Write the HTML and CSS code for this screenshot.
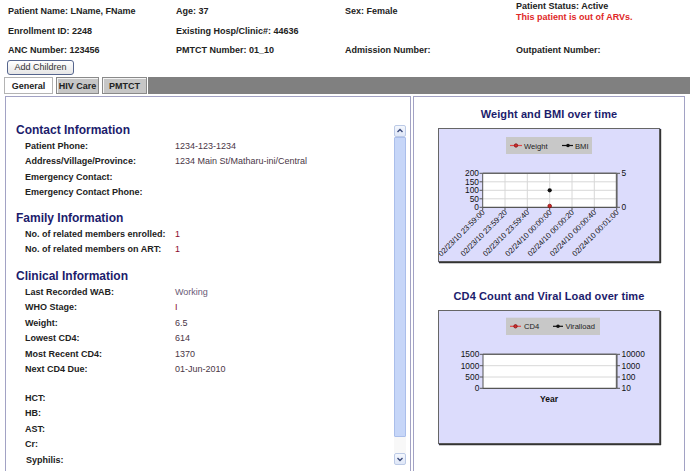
FILE: index.html
```html
<!DOCTYPE html>
<html>
<head>
<meta charset="utf-8">
<link rel="stylesheet" href="styles.css">
</head>
<body>
<div class="hdr">
  <div>Patient Name: LName, FName</div>
  <div>Age: 37</div>
  <div>Sex: Female</div>
  <div class="status"><div>Patient Status: Active</div><div class="alert">This patient is out of ARVs.</div></div>
  <div>Enrollment ID: 2248</div>
  <div>Existing Hosp/Clinic#: 44636</div>
  <div></div>
  <div></div>
  <div>ANC Number: 123456</div>
  <div>PMTCT Number: 01_10</div>
  <div>Admission Number:</div>
  <div>Outpatient Number:</div>
</div>
<div class="btnrow"><button class="btn">Add Children</button></div>
<div class="tabs">
  <div class="tab active">General</div>
  <div class="tab">HIV Care</div>
  <div class="tab">PMTCT</div>
  <div class="tabfill"></div>
</div>
<div class="panels">
  <div class="lpanel">
    <div class="scrollwrap">
      <div class="content">
        <div class="sec">Contact Information</div>
        <div class="row"><span class="lbl">Patient Phone:</span><span class="val">1234-123-1234</span></div>
        <div class="row"><span class="lbl">Address/Village/Province:</span><span class="val">1234 Main St/Matharu-ini/Central</span></div>
        <div class="row"><span class="lbl">Emergency Contact:</span><span class="val"></span></div>
        <div class="row"><span class="lbl">Emergency Contact Phone:</span><span class="val"></span></div>
        <div class="sec mt">Family Information</div>
        <div class="row"><span class="lbl">No. of related members enrolled:</span><span class="val red">1</span></div>
        <div class="row"><span class="lbl">No. of related members on ART:</span><span class="val red">1</span></div>
        <div class="sec mt2">Clinical Information</div>
        <div class="row"><span class="lbl">Last Recorded WAB:</span><span class="val muted">Working</span></div>
        <div class="row"><span class="lbl">WHO Stage:</span><span class="val red">I</span></div>
        <div class="row"><span class="lbl">Weight:</span><span class="val">6.5</span></div>
        <div class="row"><span class="lbl">Lowest CD4:</span><span class="val">614</span></div>
        <div class="row"><span class="lbl">Most Recent CD4:</span><span class="val">1370</span></div>
        <div class="row"><span class="lbl">Next CD4 Due:</span><span class="val">01-Jun-2010</span></div>
        <div class="spacer"></div>
        <div class="row"><span class="lbl">HCT:</span><span class="val"></span></div>
        <div class="row"><span class="lbl">HB:</span><span class="val"></span></div>
        <div class="row"><span class="lbl">AST:</span><span class="val"></span></div>
        <div class="row"><span class="lbl">Cr:</span><span class="val"></span></div>
        <div class="row"><span class="lbl ind">Syphilis:</span><span class="val"></span></div>
      </div>
      <div class="sb">
        <div class="sbbtn"><svg width="10" height="10" viewBox="0 0 10 10"><path d="M2.5 6 L5 3.5 L7.5 6" fill="none" stroke="#3a4a7a" stroke-width="1.4"/></svg></div>
        <div class="sbthumb"></div>
        <div class="sbtrack"></div>
        <div class="sbbtn"><svg width="10" height="10" viewBox="0 0 10 10"><path d="M2.5 4 L5 6.5 L7.5 4" fill="none" stroke="#3a4a7a" stroke-width="1.4"/></svg></div>
      </div>
    </div>
  </div>
  <div class="rpanel">
    <div class="ctitle">Weight and BMI over time</div>
    <svg class="chart" width="224" height="136" viewBox="0 0 224 136">
      <rect x="0" y="0" width="223" height="135" fill="#dcdcfc"/>
      <rect x="68" y="9" width="86" height="17" fill="#c8c8c8"/>
      <line x1="72" y1="17.5" x2="84" y2="17.5" stroke="#e04848" stroke-width="1.2"/>
      <circle cx="78" cy="17.5" r="1.7" fill="#d03030" stroke="#801010" stroke-width="0.8"/>
      <text x="86" y="20.5" class="lg">Weight</text>
      <line x1="124" y1="17.5" x2="135" y2="17.5" stroke="#111" stroke-width="1.2"/>
      <circle cx="130" cy="17.5" r="1.8" fill="#111"/>
      <text x="137" y="20.5" class="lg">BMI</text>
      <rect x="44.7" y="45.3" width="134" height="34" fill="#fff"/>
      <g stroke="#d8d8d8" stroke-width="1">
        <line x1="67" y1="45.3" x2="67" y2="79.3"/>
        <line x1="89.3" y1="45.3" x2="89.3" y2="79.3"/>
        <line x1="111.7" y1="45.3" x2="111.7" y2="79.3"/>
        <line x1="134" y1="45.3" x2="134" y2="79.3"/>
        <line x1="156.3" y1="45.3" x2="156.3" y2="79.3"/>
        <line x1="44.7" y1="53.8" x2="178.7" y2="53.8"/>
        <line x1="44.7" y1="62.3" x2="178.7" y2="62.3"/>
        <line x1="44.7" y1="70.8" x2="178.7" y2="70.8"/>
      </g>
      <g stroke="#555" stroke-width="1">
        <line x1="44.7" y1="45.3" x2="178.7" y2="45.3" stroke-width="1.6" stroke="#666"/>
        <line x1="44.7" y1="45.3" x2="44.7" y2="79.3"/>
        <line x1="178.7" y1="45.3" x2="178.7" y2="79.3" stroke-width="1.8" stroke="#666"/>
        <line x1="44.7" y1="79.3" x2="178.7" y2="79.3" stroke-width="1.3"/>
        <line x1="41.5" y1="45.3" x2="44.7" y2="45.3"/>
        <line x1="41.5" y1="53.8" x2="44.7" y2="53.8"/>
        <line x1="41.5" y1="62.3" x2="44.7" y2="62.3"/>
        <line x1="41.5" y1="70.8" x2="44.7" y2="70.8"/>
        <line x1="41.5" y1="79.3" x2="44.7" y2="79.3"/>
        <line x1="178.7" y1="45.3" x2="182" y2="45.3"/>
        <line x1="178.7" y1="79.3" x2="182" y2="79.3"/>
        <line x1="44.7" y1="79.3" x2="44.7" y2="82.5"/>
        <line x1="67" y1="79.3" x2="67" y2="82.5"/>
        <line x1="89.3" y1="79.3" x2="89.3" y2="82.5"/>
        <line x1="111.7" y1="79.3" x2="111.7" y2="82.5"/>
        <line x1="134" y1="79.3" x2="134" y2="82.5"/>
        <line x1="156.3" y1="79.3" x2="156.3" y2="82.5"/>
        <line x1="178.7" y1="79.3" x2="178.7" y2="82.5"/>
      </g>
      <g class="ax" text-anchor="end">
        <text x="41" y="48.3">200</text>
        <text x="41" y="56.8">150</text>
        <text x="41" y="65.3">100</text>
        <text x="41" y="73.8">50</text>
        <text x="41" y="82.3">0</text>
      </g>
      <g class="ax">
        <text x="183.5" y="48.3">5</text>
        <text x="183.5" y="82.3">0</text>
      </g>
      <g class="rx" text-anchor="end">
        <text transform="translate(47.2 85) rotate(-45)">02/23/10 23:59:00</text>
        <text transform="translate(69.5 85) rotate(-45)">02/23/10 23:59:20</text>
        <text transform="translate(91.8 85) rotate(-45)">02/23/10 23:59:40</text>
        <text transform="translate(114.2 85) rotate(-45)">02/24/10 00:00:00</text>
        <text transform="translate(136.5 85) rotate(-45)">02/24/10 00:00:20</text>
        <text transform="translate(158.8 85) rotate(-45)">02/24/10 00:00:40</text>
        <text transform="translate(181.2 85) rotate(-45)">02/24/10 00:01:00</text>
      </g>
      <circle cx="111.7" cy="62.3" r="2.1" fill="#111"/>
      <circle cx="111.7" cy="78" r="1.8" fill="#d02828" stroke="#801010" stroke-width="0.8"/>
      <rect x="0.5" y="0.5" width="221" height="133" fill="none" stroke="#666" stroke-width="1"/>
      <line x1="222.5" y1="1" x2="222.5" y2="135" stroke="#333" stroke-width="1.4"/>
      <line x1="1" y1="134.5" x2="223" y2="134.5" stroke="#333" stroke-width="1.4"/>
    </svg>
    <div class="ctitle t2">CD4 Count and Viral Load over time</div>
    <svg class="chart" width="224" height="136" viewBox="0 0 224 136">
      <rect x="0" y="0" width="223" height="135" fill="#dcdcfc"/>
      <rect x="68" y="7.7" width="94" height="17.3" fill="#c8c8c8"/>
      <line x1="72" y1="16.3" x2="83" y2="16.3" stroke="#e04848" stroke-width="1.2"/>
      <circle cx="77.5" cy="16.3" r="1.7" fill="#d03030" stroke="#801010" stroke-width="0.8"/>
      <text x="86" y="19.3" class="lg">CD4</text>
      <line x1="115" y1="16.3" x2="125" y2="16.3" stroke="#111" stroke-width="1.2"/>
      <circle cx="120" cy="16.3" r="1.8" fill="#111"/>
      <text x="127.5" y="19.3" class="lg">Viralload</text>
      <rect x="45" y="44.3" width="133.7" height="34" fill="#fff"/>
      <g stroke="#d8d8d8">
        <line x1="45" y1="55.7" x2="178.7" y2="55.7"/>
        <line x1="45" y1="67" x2="178.7" y2="67"/>
      </g>
      <g stroke="#555" stroke-width="1">
        <line x1="45" y1="44.3" x2="178.7" y2="44.3" stroke-width="1.6" stroke="#666"/>
        <line x1="45" y1="44.3" x2="45" y2="78.3"/>
        <line x1="178.7" y1="44.3" x2="178.7" y2="78.3" stroke-width="1.8" stroke="#666"/>
        <line x1="45" y1="78.3" x2="178.7" y2="78.3" stroke-width="1.3"/>
        <line x1="41.8" y1="44.3" x2="45" y2="44.3"/>
        <line x1="41.8" y1="55.7" x2="45" y2="55.7"/>
        <line x1="41.8" y1="67" x2="45" y2="67"/>
        <line x1="41.8" y1="78.3" x2="45" y2="78.3"/>
        <line x1="178.7" y1="44.3" x2="182" y2="44.3"/>
        <line x1="178.7" y1="55.7" x2="182" y2="55.7"/>
        <line x1="178.7" y1="67" x2="182" y2="67"/>
        <line x1="178.7" y1="78.3" x2="182" y2="78.3"/>
      </g>
      <g class="ax" text-anchor="end">
        <text x="41.3" y="47.3">1500</text>
        <text x="41.3" y="58.7">1000</text>
        <text x="41.3" y="70">500</text>
        <text x="41.3" y="81.3">0</text>
      </g>
      <g class="ax">
        <text x="183.5" y="47.3">10000</text>
        <text x="183.5" y="58.7">1000</text>
        <text x="183.5" y="70">100</text>
        <text x="183.5" y="81.3">10</text>
      </g>
      <text x="111" y="91.8" class="yr" text-anchor="middle">Year</text>
      <rect x="0.5" y="0.5" width="221" height="133" fill="none" stroke="#666" stroke-width="1"/>
      <line x1="222.5" y1="1" x2="222.5" y2="135" stroke="#333" stroke-width="1.4"/>
      <line x1="1" y1="134.5" x2="223" y2="134.5" stroke="#333" stroke-width="1.4"/>
    </svg>
  </div>
</div>
</body>
</html>
```

FILE: styles.css
```css
html, body {
  margin: 0;
  padding: 0;
  background: #fff;
  overflow: hidden;
}
body {
  width: 690px;
  height: 471px;
  font-family: "Liberation Sans", Arial, sans-serif;
  color: #222;
}
.hdr {
  display: grid;
  grid-template-columns: 168px 169px 171px 1fr;
  grid-template-rows: 22px 18px 19px;
  align-items: center;
  padding-left: 8px;
  font-size: 9px;
  font-weight: bold;
  color: #222;
}
.status {
  line-height: 11px;
  padding-top: 1px;
}
.alert {
  color: #e02828;
}
.btnrow {
  margin-top: 1px;
  padding-left: 7px;
  height: 15px;
}
.btn {
  display: block;
  width: 67px;
  height: 15px;
  padding: 0;
  margin: 0;
  border: 1px solid #56668e;
  border-radius: 3px;
  background: linear-gradient(#ffffff, #e6e6e6);
  font-family: "Liberation Sans", Arial, sans-serif;
  font-size: 9px;
  color: #333;
  line-height: 13px;
}
.tabs {
  display: flex;
  margin-top: 2px;
  height: 17px;
  padding-left: 4px;
  gap: 3px;
}
.tab {
  box-sizing: border-box;
  height: 17px;
  padding-top: 1px;
  border: 1px solid #8a8a8a;
  background: #c6c6c6;
  box-shadow: inset 1px 1px 0 #f4f4f4;
  font-size: 9px;
  font-weight: bold;
  line-height: 14px;
  text-align: center;
  color: #222;
}
.tab:nth-child(1) { width: 49px; }
.tab:nth-child(2) { width: 43px; }
.tab:nth-child(3) { width: 45px; }
.tab.active {
  background: #fff;
  border-color: #b4b4b4;
  box-shadow: none;
}
.tabfill {
  flex: 1;
  margin-left: -2px;
  background: #808080;
}
.panels {
  display: flex;
  margin-top: 2px;
  padding-left: 5px;
  gap: 2px;
}
.lpanel {
  box-sizing: border-box;
  width: 406px;
  height: 390px;
  border: 1px solid #a2a2c4;
  padding-top: 26px;
}
.scrollwrap {
  display: flex;
}
.content {
  flex: 1;
  padding-left: 10px;
  padding-top: 0;
}
.sec {
  font-size: 12px;
  font-weight: bold;
  color: #1c1c6c;
  line-height: 15px;
  height: 15px;
}
.sec.mt { margin-top: 11px; }
.sec.mt2 { margin-top: 12px; }
.row {
  display: grid;
  grid-template-columns: 150px 1fr;
  align-items: center;
  height: 15.5px;
  padding-left: 9px;
  font-size: 9px;
}
.lbl {
  font-weight: bold;
  color: #222;
}
.lbl.ind { padding-left: 1px; }
.val {
  color: #4a3646;
}
.val.red { color: #8a0c30; }
.val.muted { color: #6a5a76; }
.spacer { height: 13px; }
.sb {
  width: 12px;
  margin-right: 4px;
  margin-top: 2px;
  display: flex;
  flex-direction: column;
}
.sbbtn {
  box-sizing: border-box;
  height: 12px;
  border: 1px solid #bccae6;
  border-radius: 2px;
  background: linear-gradient(#f4f7fd, #dfe7f8);
  display: flex;
  align-items: center;
  justify-content: center;
}
.sbthumb {
  box-sizing: border-box;
  height: 300px;
  background: #c6d6f8;
  border: 1px solid #aabeea;
  border-radius: 1px;
}
.sbtrack {
  height: 16px;
  background: #f8f8f8;
}
.rpanel {
  box-sizing: border-box;
  width: 272px;
  height: 390px;
  border: 1px solid #a2a2c4;
  padding-top: 10px;
  display: flex;
  flex-direction: column;
  align-items: center;
}
.ctitle {
  font-size: 11px;
  font-weight: bold;
  color: #1c1c6c;
  line-height: 14px;
  letter-spacing: 0.1px;
  margin-bottom: 7px;
}
.ctitle.t2 { margin-top: 25px; }
.chart {
  display: block;
  margin-left: 1px;
}
.lg {
  font-family: "Liberation Sans", Arial, sans-serif;
  font-size: 7.6px;
  fill: #222;
}
.ax {
  font-family: "Liberation Sans", Arial, sans-serif;
  font-size: 8.4px;
  fill: #111;
}
.rx {
  font-family: "Liberation Sans", Arial, sans-serif;
  font-size: 7.7px;
  fill: #111;
}
.yr {
  font-family: "Liberation Sans", Arial, sans-serif;
  font-size: 8.5px;
  font-weight: bold;
  fill: #111;
}
```
